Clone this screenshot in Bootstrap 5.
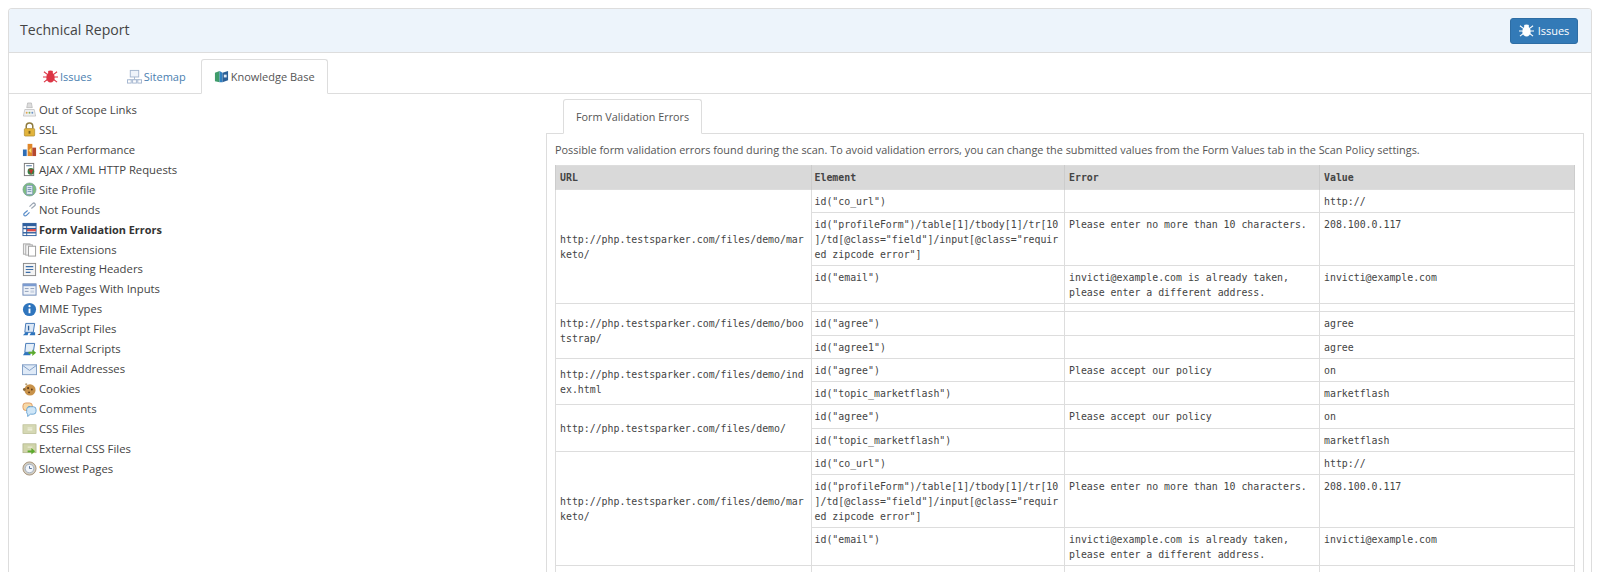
<!doctype html>
<html lang="en">
<head>
<meta charset="utf-8">
<title>Technical Report</title>
<link href="https://cdn.jsdelivr.net/npm/bootstrap@5.3.0/dist/css/bootstrap.min.css" rel="stylesheet">
<style>
html,body{overflow:hidden;height:572px}
body{background:#fff;color:#555;font-family:"Open Sans","Liberation Sans",sans-serif;font-size:11px;line-height:16px;padding:8px}
.rpt-panel{border:1px solid #ddd;border-bottom:0;border-radius:4px 4px 0 0;height:600px}
.rpt-head{background:#edf4fb;border-bottom:1px solid #ddd;height:44px;padding:0 13px 0 11px;border-radius:3px 3px 0 0}
.rpt-title{font-size:14.1px;color:#444;padding-bottom:2px}
.rpt-btn{background:#337ab7;border:1px solid #2e6da4;color:#fff;font-size:11px;height:26px;width:68px;padding:0;line-height:24px;border-radius:3px;display:flex;align-items:center;justify-content:center;gap:4px}
.rpt-tabs{padding:6px 0 0 21px;border-bottom:1px solid #ddd;height:41px;--bs-nav-tabs-border-color:#ddd}
.rpt-tabs .nav-link,.sub-tabs .nav-link{font-size:11px;height:35px;padding:0 12px;display:flex;align-items:center;gap:2px;color:#4a80b0;border-radius:3px 3px 0 0;margin:0}
.rpt-tabs .nav-item:nth-child(2){margin-left:9px}
.rpt-tabs .nav-item:nth-child(3){margin-left:2px}
.rpt-tabs .nav-link.active,.sub-tabs .nav-link.active{color:#555;background:#fff;border-color:#ddd #ddd #fff}
.rpt-side{width:537px;flex:none;padding:6px 0 0 13px}
.rpt-side ul{margin:0;padding:0;list-style:none}
.rpt-side li{height:19.95px;display:flex;align-items:center;gap:2px;color:#444;white-space:nowrap;font-size:11.3px}
.rpt-side li.on{font-weight:700;color:#333;font-size:10.9px}
.ico{width:15px;height:15px;flex:none}
.rpt-main{width:1038px;flex:none}
.sub-tabs{padding:5px 0 0 17px;--bs-nav-tabs-border-color:#ddd;border-bottom:0}
.sub-tabs .nav-link{padding:0 12px;color:#555;margin-bottom:-1px;font-size:10.8px}
.rpt-box{border:1px solid #ddd;border-bottom:0;padding:8px 8px 0 8px}
.rpt-box p{margin:0 0 7px;height:16px;white-space:nowrap;font-size:10.86px}
.rpt-table.table{margin:0;table-layout:fixed;width:1019px;font-family:"DejaVu Sans Mono",monospace;font-size:9.9px;line-height:15px;color:#444;--bs-table-border-color:#ddd}
.rpt-table.table>:not(caption)>*>*{padding:4px 0 3.3px 2.500px;color:#444;border-color:#ddd;box-shadow:none}
.rpt-table.table>thead>tr>th{background:#d9d9d9;font-weight:700;border-color:#ccc;padding-bottom:4px;padding-left:4px}
.rpt-table.table>thead>tr>th.c2{padding-left:2.500px}
.rpt-table.table>tbody>tr>td.mid{vertical-align:middle;padding-left:4px;padding-right:3px}
.rpt-table.table>tbody>tr.gap-row>td:not(.mid){padding:0;height:8px;line-height:0}
.rpt-table.table>tbody>tr.multi-row>td{padding-bottom:3px}
.rpt-table td{line-break:anywhere;word-break:break-all}
.rpt-table.table>tbody>tr>td.wrapw{word-break:normal;line-break:auto;padding-left:4px;padding-right:4px}
.c1{width:256px}.c2{width:253px}.c3{width:255px}.c4{width:255px}
</style>
</head>
<body>
<svg width="0" height="0" class="d-none">
<defs>
<symbol id="i-bug" viewBox="0 0 16 16"><g stroke="currentColor" stroke-width="1.2" fill="none"><path d="M1 3l4 3M15 3l-4 3M0 8.500h4M16 8.500h-4M1 14l4-3M15 14l-4-3M6 2l1 2M10 2L9 4"/></g><ellipse cx="8" cy="9" rx="4.500" ry="5.500" fill="currentColor"/><circle cx="8" cy="4" r="2.500" fill="currentColor"/></symbol>
<symbol id="i-map" viewBox="0 0 16 16"><rect x="3.500" y="1.500" width="9" height="7" fill="#eef3fa" stroke="#a3b5cf"/><path d="M8 8.500v3M2.500 11.500h11" stroke="#a3b5cf"/><rect x=".5" y="11.500" width="4" height="3.500" fill="#fff" stroke="#a3b5cf"/><rect x="6" y="11.500" width="4" height="3.500" fill="#fff" stroke="#a3b5cf"/><rect x="11.500" y="11.500" width="4" height="3.500" fill="#fff" stroke="#a3b5cf"/></symbol>
<symbol id="i-book" viewBox="0 0 16 16"><path d="M1 4l5-2v12l-5-1z" fill="#3f9c6b"/><path d="M6 2l3 2v10l-3 0z" fill="#2f7fc1"/><path d="M9 4l6-2v10l-6 2z" fill="#2b5f97"/><path d="M10.500 6h3v3h-3z" fill="#dfeaf5"/></symbol>
<symbol id="i-scope" viewBox="0 0 16 16"><path d="M6 1h4l1 5h-6z" fill="#ddd" stroke="#aaa" stroke-width=".6"/><path d="M1.500 15l1.500-7h10l1.500 7z" fill="#eef0f2" stroke="#b5b5b5" stroke-width=".7"/><circle cx="5" cy="11.500" r="1" fill="#e3a34a"/><circle cx="8" cy="11.500" r="1" fill="#7db05a"/><circle cx="11" cy="11.500" r="1" fill="#6b93c7"/></symbol>
<symbol id="i-lock" viewBox="0 0 16 16"><path d="M4.500 7V4.500a3.500 3.500 0 017 0V7" fill="none" stroke="#8d7a3e" stroke-width="1.600"/><rect x="2.500" y="7" width="11" height="8" rx="1" fill="#e2b43c" stroke="#a8862c" stroke-width=".7"/><rect x="7" y="9.500" width="2" height="3" fill="#7d6420"/></symbol>
<symbol id="i-perf" viewBox="0 0 16 16"><rect x="1" y="8" width="4" height="7" fill="#2f6db5"/><rect x="6" y="2" width="5" height="13" fill="#e0872a"/><rect x="11" y="6" width="4" height="9" fill="#b5482f"/><path d="M7 9l3-3v6z" fill="#f5dc6b"/></symbol>
<symbol id="i-ajax" viewBox="0 0 16 16"><rect x="2.500" y="1.500" width="10" height="13" fill="#fff" stroke="#777"/><circle cx="9.500" cy="10" r="3.500" fill="#3a7d44"/><path d="M7 8h5l-2 5z" fill="#c4372c"/><path d="M4.500 4h6" stroke="#456c96"/></symbol>
<symbol id="i-site" viewBox="0 0 16 16"><circle cx="8" cy="8" r="7" fill="#7fbf7f" stroke="#7a9c9c" stroke-width=".7"/><rect x="4.500" y="3.500" width="7" height="10" fill="#dfe9f3" stroke="#6a87a8" stroke-width=".7"/><path d="M6 6h4M6 8h4M6 10h4" stroke="#5577a0" stroke-width=".8"/></symbol>
<symbol id="i-link" viewBox="0 0 16 16"><g fill="none" stroke="#5b8ec9" stroke-width="1.300"><path d="M6 9l-3.500 3a1.500 1.500 0 002 2.500L8 11"/><path d="M10 7l3.500-3a1.500 1.500 0 00-2-2.500L8 5" stroke="#9ba6b3"/></g></symbol>
<symbol id="i-form" viewBox="0 0 16 16"><rect x="1" y="1.500" width="14" height="13" fill="#fff" stroke="#2f5f9e"/><path d="M1 1.500h14v3H1z" fill="#2f5f9e"/><path d="M1 7h14" stroke="#2f5f9e" stroke-width="1.500"/><path d="M5 7.500h10v2.500H5z" fill="#d94a4a"/><path d="M1 11.500h14" stroke="#2f5f9e" stroke-width="1.500"/><path d="M5 4v11" stroke="#2f5f9e"/></symbol>
<symbol id="i-file" viewBox="0 0 16 16"><rect x="1.500" y="2" width="7" height="11" fill="#eee" stroke="#aaa"/><rect x="4" y="3" width="7" height="11" fill="#f5f5f5" stroke="#aaa"/><rect x="7" y="4.500" width="7.500" height="10.500" fill="#fff" stroke="#999"/></symbol>
<symbol id="i-head" viewBox="0 0 16 16"><rect x="1.500" y="1.500" width="13" height="13" fill="#f3f3f3" stroke="#888"/><path d="M4 5h8M4 8h8M4 11h5" stroke="#3c6ea8" stroke-width="1.300"/></symbol>
<symbol id="i-page" viewBox="0 0 16 16"><rect x="1" y="2" width="14" height="12" fill="#eef2f8" stroke="#6b86b5"/><path d="M1 2h14v2.500H1z" fill="#7b9bd0"/><path d="M3 7h4M9 7h4M3 10h4" stroke="#8a9bb5"/><rect x="9" y="9" width="4" height="2.500" fill="#c9d3e2"/></symbol>
<symbol id="i-info" viewBox="0 0 16 16"><circle cx="8" cy="8" r="7" fill="#2f75bd"/><path d="M8 7v5" stroke="#fff" stroke-width="2"/><circle cx="8" cy="4.500" r="1.200" fill="#fff"/></symbol>
<symbol id="i-js" viewBox="0 0 16 16"><path d="M4 1.500h9.500L12 11H3z" fill="#dce8f6" stroke="#3f74b5"/><path d="M7 4v5" stroke="#2c5e99" stroke-width="1.400"/><path d="M1 14l3-3h3l-1 3zM8 14l2-3h4v3z" fill="#2f75bd"/></symbol>
<symbol id="i-ext" viewBox="0 0 16 16"><path d="M4 1.500h9.500L12 11H3z" fill="#e4eef8" stroke="#3f74b5"/><path d="M1 14l2-3h6v3z" fill="#2f75bd"/><path d="M7 10.500h4V8l4 3.500-4 3.500v-2.500H7z" fill="#5cab2d"/></symbol>
<symbol id="i-mail" viewBox="0 0 16 16"><rect x=".5" y="3" width="15" height="10.500" fill="#dfeaf7" stroke="#7e9cc4"/><path d="M.5 3.500L8 9l7.500-5.500" fill="none" stroke="#7e9cc4"/></symbol>
<symbol id="i-cook" viewBox="0 0 16 16"><circle cx="8.500" cy="8.500" r="6" fill="#c8924a"/><circle cx="6.500" cy="6.500" r="1.100" fill="#5c3a1a"/><circle cx="10.500" cy="8" r="1" fill="#5c3a1a"/><circle cx="7.500" cy="11" r="1" fill="#5c3a1a"/><circle cx="2.500" cy="8" r="1.500" fill="#8a6a3c"/><circle cx="4.500" cy="2.500" r="1.200" fill="#bba37a"/></symbol>
<symbol id="i-comm" viewBox="0 0 16 16"><rect x="1" y="1" width="10" height="8" rx="3" fill="#f7d9a8" stroke="#d98a4a" stroke-width=".8"/><path d="M7 5h5a3 3 0 013 3v2a3 3 0 01-3 3H9l-3 2.500V13a3 3 0 01-1-3V8a3 3 0 013-3z" fill="#cfe6f7" stroke="#4f93c9" stroke-width=".8"/></symbol>
<symbol id="i-css" viewBox="0 0 16 16"><rect x="1" y="4" width="14" height="9.500" fill="#d5d8b4" stroke="#b7bb90" stroke-width=".7"/><path d="M6 7.500h5M6 9.500h5" stroke="#f2f2e2" stroke-width="1.200"/></symbol>
<symbol id="i-extc" viewBox="0 0 16 16"><rect x="1" y="3" width="14" height="9.500" fill="#d0d4aa" stroke="#a9ad82" stroke-width=".7"/><path d="M6 6.500h5" stroke="#f2f2e2"/><path d="M6 10h4V7.500l4 3.500-4 3.500V12H6z" fill="#5cab2d"/></symbol>
<symbol id="i-clock" viewBox="0 0 16 16"><circle cx="8" cy="8" r="7" fill="#cfcdc4" stroke="#a8927a"/><circle cx="8" cy="8" r="4.500" fill="#f2f5fa" stroke="#8b9bb4" stroke-width=".7"/><path d="M8 5.500V8h2.500" fill="none" stroke="#4f6f99"/></symbol>
</defs>
</svg>

<div class="rpt-panel">
  <div class="rpt-head d-flex align-items-center justify-content-between">
    <span class="rpt-title">Technical Report</span>
    <button type="button" class="btn rpt-btn"><svg class="ico"><use href="#i-bug"/></svg>Issues</button>
  </div>
  <ul class="nav nav-tabs rpt-tabs">
    <li class="nav-item"><a class="nav-link text-nowrap" href="#"><svg class="ico text-danger"><use href="#i-bug"/></svg>Issues</a></li>
    <li class="nav-item"><a class="nav-link text-nowrap" href="#"><svg class="ico"><use href="#i-map"/></svg>Sitemap</a></li>
    <li class="nav-item"><a class="nav-link active text-nowrap" href="#"><svg class="ico"><use href="#i-book"/></svg>Knowledge Base</a></li>
  </ul>
  <div class="d-flex">
    <div class="rpt-side">
      <ul>
        <li><svg class="ico"><use href="#i-scope"/></svg>Out of Scope Links</li>
        <li><svg class="ico"><use href="#i-lock"/></svg>SSL</li>
        <li><svg class="ico"><use href="#i-perf"/></svg>Scan Performance</li>
        <li><svg class="ico"><use href="#i-ajax"/></svg>AJAX / XML HTTP Requests</li>
        <li><svg class="ico"><use href="#i-site"/></svg>Site Profile</li>
        <li><svg class="ico"><use href="#i-link"/></svg>Not Founds</li>
        <li class="on"><svg class="ico"><use href="#i-form"/></svg>Form Validation Errors</li>
        <li><svg class="ico"><use href="#i-file"/></svg>File Extensions</li>
        <li><svg class="ico"><use href="#i-head"/></svg>Interesting Headers</li>
        <li><svg class="ico"><use href="#i-page"/></svg>Web Pages With Inputs</li>
        <li><svg class="ico"><use href="#i-info"/></svg>MIME Types</li>
        <li><svg class="ico"><use href="#i-js"/></svg>JavaScript Files</li>
        <li><svg class="ico"><use href="#i-ext"/></svg>External Scripts</li>
        <li><svg class="ico"><use href="#i-mail"/></svg>Email Addresses</li>
        <li><svg class="ico"><use href="#i-cook"/></svg>Cookies</li>
        <li><svg class="ico"><use href="#i-comm"/></svg>Comments</li>
        <li><svg class="ico"><use href="#i-css"/></svg>CSS Files</li>
        <li><svg class="ico"><use href="#i-extc"/></svg>External CSS Files</li>
        <li><svg class="ico"><use href="#i-clock"/></svg>Slowest Pages</li>
      </ul>
    </div>
    <div class="rpt-main">
      <ul class="nav nav-tabs sub-tabs">
        <li class="nav-item"><a class="nav-link active" href="#">Form Validation Errors</a></li>
      </ul>
      <div class="rpt-box">
        <p>Possible form validation errors found during the scan. To avoid validation errors, you can change the submitted values from the Form Values tab in the Scan Policy settings.</p>
        <table class="table table-bordered rpt-table">
          <thead><tr><th class="c1">URL</th><th class="c2">Element</th><th class="c3">Error</th><th class="c4">Value</th></tr></thead>
          <tbody>
            <tr><td class="mid" rowspan="3">http://php.testsparker.com/files/demo/marketo/</td><td>id("co_url")</td><td class="wrapw"></td><td class="wrapw">http://</td></tr>
            <tr class="multi-row"><td>id("profileForm")/table[1]/tbody[1]/tr[10]/td[@class="field"]/input[@class="required zipcode error"]</td><td class="wrapw">Please enter no more than 10 characters.</td><td class="wrapw">208.100.0.117</td></tr>
            <tr class="multi-row"><td>id("email")</td><td class="wrapw">invicti@example.com is already taken, please enter a different address.</td><td class="wrapw">invicti@example.com</td></tr>
            <tr class="gap-row"><td class="mid" rowspan="3">http://php.testsparker.com/files/demo/bootstrap/</td><td></td><td></td><td></td></tr>
            <tr><td>id("agree")</td><td class="wrapw"></td><td class="wrapw">agree</td></tr>
            <tr><td>id("agree1")</td><td class="wrapw"></td><td class="wrapw">agree</td></tr>
            <tr><td class="mid" rowspan="2">http://php.testsparker.com/files/demo/index.html</td><td>id("agree")</td><td class="wrapw">Please accept our policy</td><td class="wrapw">on</td></tr>
            <tr><td>id("topic_marketflash")</td><td class="wrapw"></td><td class="wrapw">marketflash</td></tr>
            <tr><td class="mid" rowspan="2">http://php.testsparker.com/files/demo/</td><td>id("agree")</td><td class="wrapw">Please accept our policy</td><td class="wrapw">on</td></tr>
            <tr><td>id("topic_marketflash")</td><td class="wrapw"></td><td class="wrapw">marketflash</td></tr>
            <tr><td class="mid" rowspan="3">http://php.testsparker.com/files/demo/marketo/</td><td>id("co_url")</td><td class="wrapw"></td><td class="wrapw">http://</td></tr>
            <tr class="multi-row"><td>id("profileForm")/table[1]/tbody[1]/tr[10]/td[@class="field"]/input[@class="required zipcode error"]</td><td class="wrapw">Please enter no more than 10 characters.</td><td class="wrapw">208.100.0.117</td></tr>
            <tr class="multi-row"><td>id("email")</td><td class="wrapw">invicti@example.com is already taken, please enter a different address.</td><td class="wrapw">invicti@example.com</td></tr>
            <tr class="gap-row"><td></td><td></td><td></td><td></td></tr>
          </tbody>
        </table>
      </div>
    </div>
  </div>
</div>
<script src="https://cdn.jsdelivr.net/npm/bootstrap@5.3.0/dist/js/bootstrap.bundle.min.js"></script>
</body>
</html>
